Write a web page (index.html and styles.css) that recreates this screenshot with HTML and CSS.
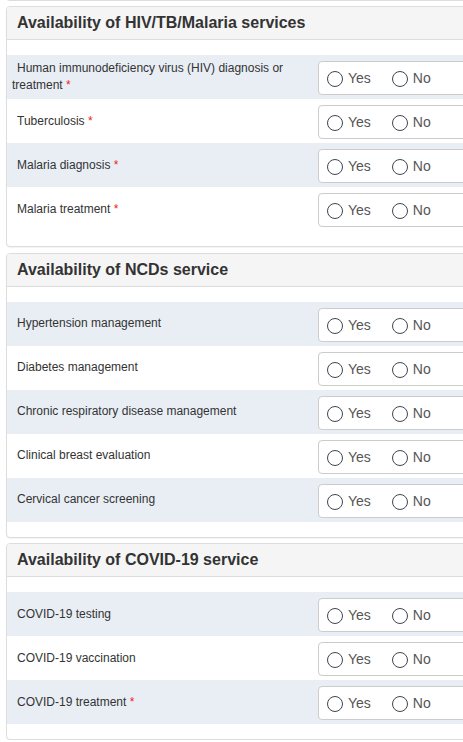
FILE: index.html
```html
<!DOCTYPE html>
<html>
<head>
<meta charset="utf-8">
<link rel="stylesheet" href="styles.css">
</head>
<body>
<div class="page">
  <div class="prev-panel"></div>

  <section class="panel">
    <div class="panel-heading"><h3 class="panel-title">Availability of HIV/TB/Malaria services</h3></div>
    <div class="panel-body">
      <div class="row striped">
        <div class="label">Human immunodeficiency virus (HIV) diagnosis or treatment <span class="req">*</span></div>
        <div class="choice"><span class="opt"><span class="radio"></span>Yes</span><span class="opt"><span class="radio"></span>No</span></div>
      </div>
      <div class="row">
        <div class="label">Tuberculosis <span class="req">*</span></div>
        <div class="choice"><span class="opt"><span class="radio"></span>Yes</span><span class="opt"><span class="radio"></span>No</span></div>
      </div>
      <div class="row striped">
        <div class="label">Malaria diagnosis <span class="req">*</span></div>
        <div class="choice"><span class="opt"><span class="radio"></span>Yes</span><span class="opt"><span class="radio"></span>No</span></div>
      </div>
      <div class="row">
        <div class="label">Malaria treatment <span class="req">*</span></div>
        <div class="choice"><span class="opt"><span class="radio"></span>Yes</span><span class="opt"><span class="radio"></span>No</span></div>
      </div>
    </div>
  </section>

  <section class="panel">
    <div class="panel-heading"><h3 class="panel-title">Availability of NCDs service</h3></div>
    <div class="panel-body">
      <div class="row striped">
        <div class="label">Hypertension management</div>
        <div class="choice"><span class="opt"><span class="radio"></span>Yes</span><span class="opt"><span class="radio"></span>No</span></div>
      </div>
      <div class="row">
        <div class="label">Diabetes management</div>
        <div class="choice"><span class="opt"><span class="radio"></span>Yes</span><span class="opt"><span class="radio"></span>No</span></div>
      </div>
      <div class="row striped">
        <div class="label">Chronic respiratory disease management</div>
        <div class="choice"><span class="opt"><span class="radio"></span>Yes</span><span class="opt"><span class="radio"></span>No</span></div>
      </div>
      <div class="row">
        <div class="label">Clinical breast evaluation</div>
        <div class="choice"><span class="opt"><span class="radio"></span>Yes</span><span class="opt"><span class="radio"></span>No</span></div>
      </div>
      <div class="row striped">
        <div class="label">Cervical cancer screening</div>
        <div class="choice"><span class="opt"><span class="radio"></span>Yes</span><span class="opt"><span class="radio"></span>No</span></div>
      </div>
    </div>
  </section>

  <section class="panel">
    <div class="panel-heading"><h3 class="panel-title">Availability of COVID-19 service</h3></div>
    <div class="panel-body">
      <div class="row striped">
        <div class="label">COVID-19 testing</div>
        <div class="choice"><span class="opt"><span class="radio"></span>Yes</span><span class="opt"><span class="radio"></span>No</span></div>
      </div>
      <div class="row">
        <div class="label">COVID-19 vaccination</div>
        <div class="choice"><span class="opt"><span class="radio"></span>Yes</span><span class="opt"><span class="radio"></span>No</span></div>
      </div>
      <div class="row striped">
        <div class="label">COVID-19 treatment <span class="req">*</span></div>
        <div class="choice"><span class="opt"><span class="radio"></span>Yes</span><span class="opt"><span class="radio"></span>No</span></div>
      </div>
    </div>
  </section>
</div>
</body>
</html>
```

FILE: styles.css
```css
html, body {
  margin: 0;
  padding: 0;
  background: #fff;
  overflow: hidden;
}

body {
  font-family: "Liberation Sans", Arial, Helvetica, sans-serif;
  color: #333;
}

.page {
  padding-left: 6px;
  width: 520px;
}

.prev-panel {
  height: 4px;
  margin-top: -4px;
  margin-bottom: -0.5px;
  border: 1px solid #ddd;
  border-top: none;
  border-radius: 0 0 4px 4px;
}

.panel {
  margin-top: 5.5px;
  border: 1px solid #ddd;
  border-radius: 4px;
  background: #fff;
  box-shadow: 0 1px 1px rgba(0, 0, 0, 0.05);
}

.panel-heading {
  height: 32px;
  display: flex;
  align-items: center;
  padding: 0 10px;
  background: #f5f5f5;
  border-bottom: 1px solid #ddd;
  border-radius: 3px 3px 0 0;
}

.panel-title {
  margin: 0;
  font-size: 16px;
  font-weight: bold;
  line-height: 18px;
  color: #333;
}

.panel-body {
  padding: 15px 0;
}

.row {
  display: flex;
  align-items: center;
  height: 44px;
}

.row.striped {
  background: #e9eef5;
}

.label {
  flex: 0 0 311px;
  box-sizing: border-box;
  padding: 0 20px 0 5px;
  text-indent: 5px;
  font-size: 12px;
  line-height: 17px;
  color: #333;
}

.req {
  color: #ee2222;
}

.choice {
  flex: 0 0 200px;
  box-sizing: border-box;
  height: 34px;
  margin-top: 2px;
  display: flex;
  align-items: center;
  padding-left: 8px;
  border: 1px solid #ccc;
  border-radius: 4px;
  background: #fff;
  font-size: 14px;
  color: #555;
}

.opt {
  display: flex;
  align-items: center;
  margin-right: 21px;
  line-height: 16px;
}

.radio {
  width: 14px;
  height: 14px;
  border: 1.3px solid #3f4550;
  border-radius: 50%;
  margin-right: 5px;
  margin-top: 2px;
  box-sizing: content-box;
  flex: none;
}
```
